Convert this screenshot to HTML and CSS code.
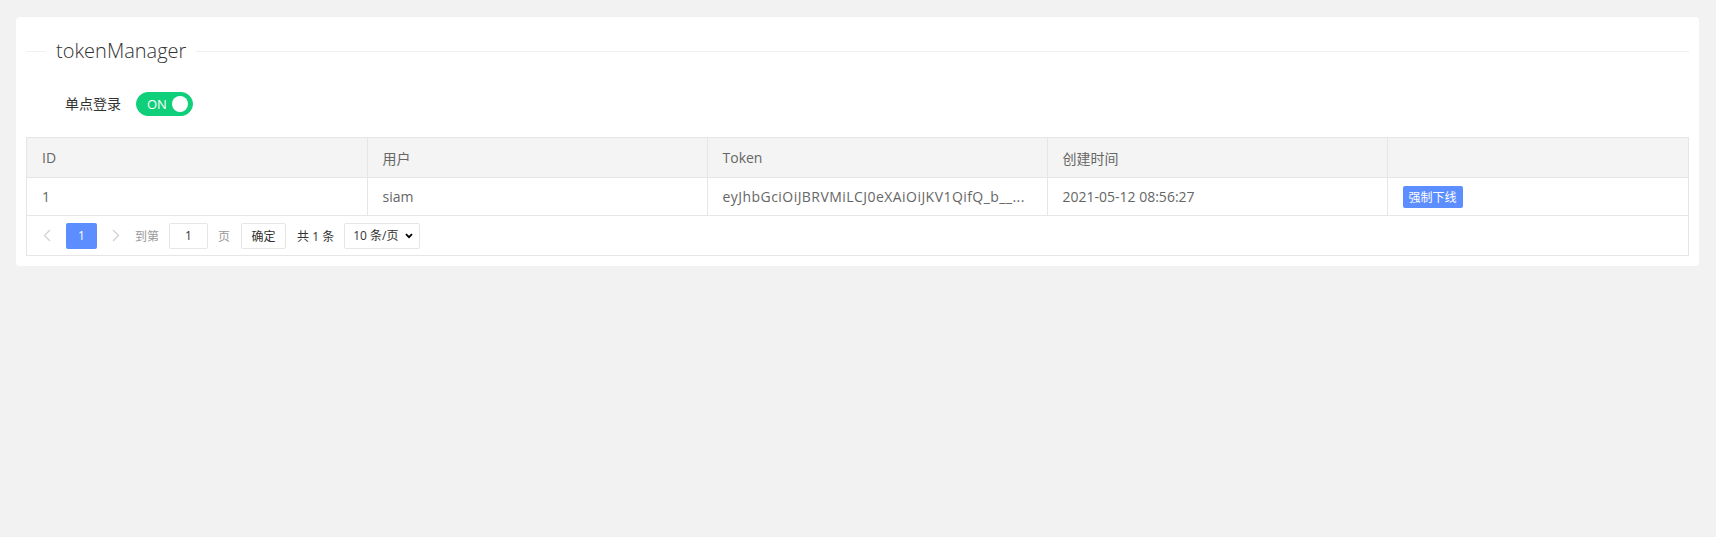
FILE: index.html
```html
<!DOCTYPE html>
<html lang="zh-CN">
<head>
<meta charset="utf-8">
<title>tokenManager</title>
<link rel="stylesheet" href="styles.css">
</head>
<body>
<div class="page">
  <div class="card">
    <fieldset class="field-title"><legend>tokenManager</legend></fieldset>
    <div class="form-item">
      <label class="form-label">单点登录</label>
      <div class="input-block">
        <div class="switch on"><em>ON</em><i></i></div>
      </div>
    </div>
    <div class="table-box">
      <table class="data-table">
        <colgroup>
          <col class="c1"><col class="c1"><col class="c1"><col class="c1"><col>
        </colgroup>
        <thead>
          <tr><th>ID</th><th>用户</th><th>Token</th><th>创建时间</th><th></th></tr>
        </thead>
        <tbody>
          <tr>
            <td>1</td>
            <td>siam</td>
            <td><div class="cell-ellipsis">eyJhbGciOiJBRVMiLCJ0eXAiOiJKV1QifQ_b__...</div></td>
            <td>2021-05-12 08:56:27</td>
            <td><button class="btn-xs">强制下线</button></td>
          </tr>
        </tbody>
      </table>
      <div class="table-page">
        <span class="pg-arrow disabled"><svg width="8" height="13" viewBox="0 0 8 13"><path d="M7 1 L1.5 6.5 L7 12" fill="none" stroke="currentColor" stroke-width="1.3"/></svg></span>
        <span class="pg-cur">1</span>
        <span class="pg-arrow disabled"><svg width="8" height="13" viewBox="0 0 8 13"><path d="M1 1 L6.5 6.5 L1 12" fill="none" stroke="currentColor" stroke-width="1.3"/></svg></span>
        <span class="pg-text">到第</span>
        <input class="pg-input" value="1">
        <span class="pg-text">页</span>
        <button class="pg-btn">确定</button>
        <span class="pg-count">共 1 条</span>
        <select class="pg-select"><option>10 条/页</option><option>20 条/页</option></select>
      </div>
    </div>
  </div>
</div>
</body>
</html>
```

FILE: styles.css
```css
html, body {
  margin: 0;
  padding: 0;
  background: #f2f2f2;
}
body {
  font-family: "Open Sans", "Noto Sans CJK SC", sans-serif;
  color: #666;
  font-size: 14px;
}
.page {
  padding: 17px 17px 16px 16px;
}
.card {
  background: #fff;
  border-radius: 4px;
  padding: 10px 10px 10px 10px;
}
.field-title {
  margin: 10px 0 20px;
  padding: 0;
  border: 0;
  border-top: 1px solid #f1f1f1;
  min-width: 0;
}
.field-title legend {
  margin-left: 20px;
  padding: 0 10px;
  font-size: 20px;
  font-weight: 300;
  color: #333;
  line-height: 28px;
}
.form-item {
  display: flex;
  align-items: flex-start;
  margin-bottom: 14px;
}
.form-label {
  width: 80px;
  padding: 9px 15px;
  line-height: 20px;
  text-align: right;
  color: #333;
  font-size: 14px;
}
.input-block {
  padding-top: 7px;
}
.switch {
  position: relative;
  box-sizing: border-box;
  width: 57px;
  height: 24px;
  border-radius: 20px;
  display: flex;
  align-items: center;
}
.switch.on {
  background: #10cf7a;
  border: 1px solid #10cf7a;
}
.switch em {
  font-style: normal;
  color: #fff;
  font-size: 13px;
  margin-left: 10px;
  line-height: 22px;
}
.switch i {
  position: absolute;
  right: 4px;
  top: 3px;
  width: 16px;
  height: 16px;
  border-radius: 50%;
  background: #fff;
}
.table-box {
  border: 1px solid #e6e6e6;
}
.data-table {
  width: 100%;
  border-collapse: collapse;
  table-layout: fixed;
}
.data-table col.c1 {
  width: 340px;
}
.data-table th,
.data-table td {
  text-align: left;
  font-weight: normal;
  color: #666;
  font-size: 14px;
  padding: 0 15px;
  border-left: 1px solid #e6e6e6;
  border-bottom: 1px solid #e6e6e6;
  white-space: nowrap;
  overflow: hidden;
}
.data-table th:first-child,
.data-table td:first-child {
  border-left: 0;
}
.data-table th {
  background: #f4f4f4;
  height: 39px;
}
.data-table td {
  height: 37px;
}
.cell-ellipsis {
  overflow: hidden;
  text-overflow: ellipsis;
  white-space: nowrap;
  letter-spacing: 0.45px;
}
.btn-xs {
  height: 22px;
  line-height: 22px;
  padding: 0 6px;
  font-size: 12px;
  border: 0;
  border-radius: 2px;
  background: #5c8eff;
  color: #fff;
  font-family: "Noto Sans CJK SC", sans-serif;
  display: inline-block;
  vertical-align: middle;
}
.table-page {
  display: flex;
  align-items: center;
  height: 39px;
  padding: 0 0 0 5px;
  font-size: 12px;
  font-family: "Open Sans", "Noto Sans CJK SC", sans-serif;
}
.pg-arrow {
  width: 30px;
  height: 26px;
  display: flex;
  align-items: center;
  justify-content: center;
  color: #d2d2d2;
  margin-right: 4px;
}
.pg-cur {
  width: 31px;
  height: 26px;
  line-height: 26px;
  text-align: center;
  background: #5c8eff;
  color: #fff;
  border-radius: 2px;
  margin-right: 4px;
}
.pg-text {
  color: #999;
}
.pg-input {
  box-sizing: border-box;
  width: 39px;
  height: 26px;
  margin: 0 10px;
  border: 1px solid #e6e6e6;
  border-radius: 2px;
  text-align: center;
  font-size: 12px;
  color: #333;
  font-family: inherit;
  padding: 0;
  outline: none;
}
.pg-btn {
  box-sizing: border-box;
  width: 45px;
  height: 26px;
  margin: 0 11px 0 11px;
  border: 1px solid #e6e6e6;
  border-radius: 2px;
  background: #fff;
  font-size: 12px;
  color: #333;
  font-family: inherit;
  padding: 0;
}
.pg-count {
  color: #333;
  margin-right: 10px;
}
.pg-select {
  appearance: none;
  -webkit-appearance: none;
  box-sizing: border-box;
  width: 76px;
  height: 26px;
  border: 1px solid #e6e6e6;
  border-radius: 2px;
  background: #fff url("data:image/svg+xml;utf8,<svg xmlns='http://www.w3.org/2000/svg' width='8' height='6' viewBox='0 0 8 6'><path d='M1 1.2 L4 4.2 L7 1.2' fill='none' stroke='black' stroke-width='1.8'/></svg>") no-repeat right 6px center;
  padding: 0 0 0 8px;
  font-size: 12px;
  color: #333;
  font-family: inherit;
  outline: none;
}
```
